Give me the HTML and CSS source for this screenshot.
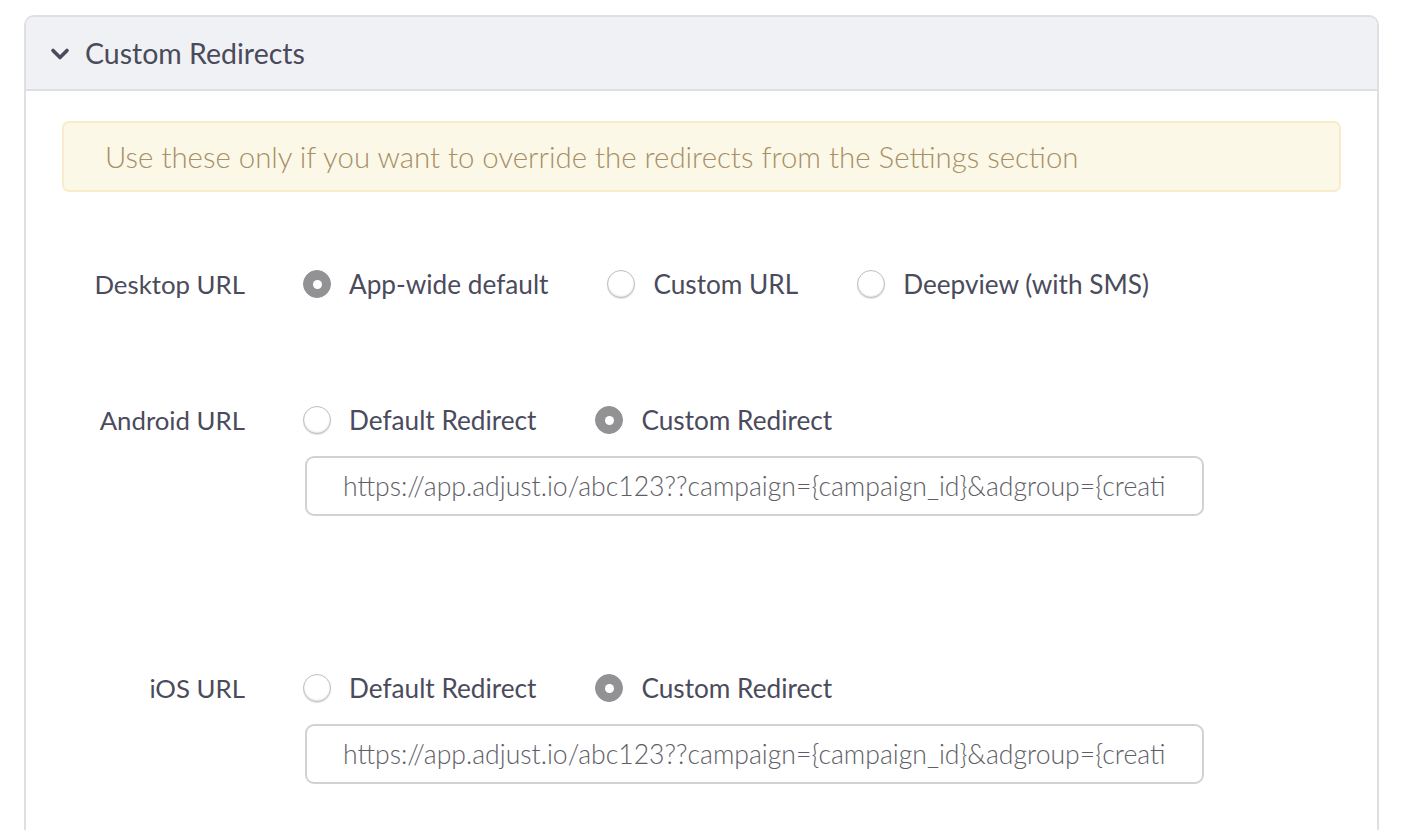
FILE: index.html
```html
<!DOCTYPE html>
<html>
<head>
<meta charset="utf-8">
<link rel="stylesheet" href="styles.css">
</head>
<body>
<div class="panel">
  <div class="panel-head">
    <svg class="chev" width="20" height="14" viewBox="0 0 20 14"><path d="M3 3.5 L10 10.5 L17 3.5" fill="none" stroke="#4a4b5a" stroke-width="3.6" stroke-linecap="round" stroke-linejoin="round"/></svg>
    <span class="title">Custom Redirects</span>
  </div>
  <div class="panel-body">
    <div class="alert">Use these only if you want to override the redirects from the Settings section</div>

    <div class="row row-desktop">
      <div class="label">Desktop URL</div>
      <div class="field">
        <div class="radios">
          <span class="opt"><span class="radio checked"></span>App-wide default</span>
          <span class="opt"><span class="radio"></span>Custom URL</span>
          <span class="opt"><span class="radio"></span>Deepview (with SMS)</span>
        </div>
      </div>
    </div>

    <div class="row row-android">
      <div class="label">Android URL</div>
      <div class="field">
        <div class="radios">
          <span class="opt"><span class="radio"></span>Default Redirect</span>
          <span class="opt"><span class="radio checked"></span>Custom Redirect</span>
        </div>
        <input class="url" type="text" readonly value="https://app.adjust.io/abc123??campaign={campaign_id}&amp;adgroup={creative_id}&amp;creative={ad_id}">
      </div>
    </div>

    <div class="row row-ios">
      <div class="label">iOS URL</div>
      <div class="field">
        <div class="radios">
          <span class="opt"><span class="radio"></span>Default Redirect</span>
          <span class="opt"><span class="radio checked"></span>Custom Redirect</span>
        </div>
        <input class="url" type="text" readonly value="https://app.adjust.io/abc123??campaign={campaign_id}&amp;adgroup={creative_id}&amp;creative={ad_id}">
      </div>
    </div>
  </div>
</div>
</body>
</html>
```
FILE: styles.css
```css
html, body {
  margin: 0;
  padding: 0;
  background: #ffffff;
  font-family: "Lato", "Open Sans", sans-serif;
  color: #4a4b5c;
}
body {
  padding: 15px 0 0 24px;
  height: 815px;
  overflow: hidden;
}
.panel {
  width: 1355px;
  box-sizing: border-box;
  border: 2px solid #dedfe2;
  border-bottom: none;
  border-radius: 10px 10px 0 0;
  height: 840px;
}
.panel-head {
  height: 74px;
  box-sizing: border-box;
  background: #f0f1f5;
  border-bottom: 2px solid #dedfe2;
  border-radius: 8px 8px 0 0;
  display: flex;
  align-items: center;
  padding-left: 24px;
}
.chev {
  margin-right: 15px;
  margin-top: 1px;
}
.title {
  font-size: 28.5px;
  color: #4a4b5a;
  margin-top: 0;
}
.panel-body {
  padding: 30px 36px 0 36px;
}
.alert {
  height: 71px;
  box-sizing: border-box;
  background: #fcf8e8;
  border: 2px solid #faeccb;
  border-radius: 7px;
  display: flex;
  align-items: center;
  padding-left: 41px;
  font-size: 29.4px;
  font-weight: 300;
  color: #a78f66;
}
.row {
  display: flex;
  align-items: flex-start;
}
.label {
  width: 183px;
  text-align: right;
  font-size: 25.8px;
  line-height: 34px;
  flex: none;
}
.field {
  margin-left: 58px;
  flex: none;
  width: 900px;
}
.radios {
  display: flex;
  gap: 59px;
  height: 34px;
  align-items: center;
}
.opt {
  display: flex;
  align-items: center;
  font-size: 26.2px;
  line-height: 34px;
  white-space: nowrap;
}
.radio {
  width: 26px;
  height: 26px;
  border-radius: 50%;
  border: 1px solid #c0c0c3;
  box-shadow: 0 1px 1px rgba(0,0,0,0.12), inset 0 -1px 2px rgba(0,0,0,0.10);
  background: #fff;
  margin-right: 18px;
  box-sizing: content-box;
  position: relative;
  flex: none;
}
.radio.checked {
  background: #929295;
  border-color: #929295;
  box-shadow: none;
}
.radio.checked::after {
  content: "";
  position: absolute;
  left: 8.5px;
  top: 8.5px;
  width: 9px;
  height: 9px;
  border-radius: 50%;
  background: #fff;
}
.row-desktop { margin-top: 75px; }
.row-android { margin-top: 102px; }
.row-ios { margin-top: 155px; }
.url {
  display: block;
  margin-top: 19px;
  margin-left: 2px;
  width: 899px;
  height: 60px;
  box-sizing: border-box;
  border: 2px solid #d2d2d6;
  border-radius: 9px;
  padding: 0 36px 0 36px;
  font-family: "Lato", "Open Sans", sans-serif;
  font-size: 26.6px;
  font-weight: 300;
  color: #5e5e66;
  background: #fff;
  outline: none;
}
```
